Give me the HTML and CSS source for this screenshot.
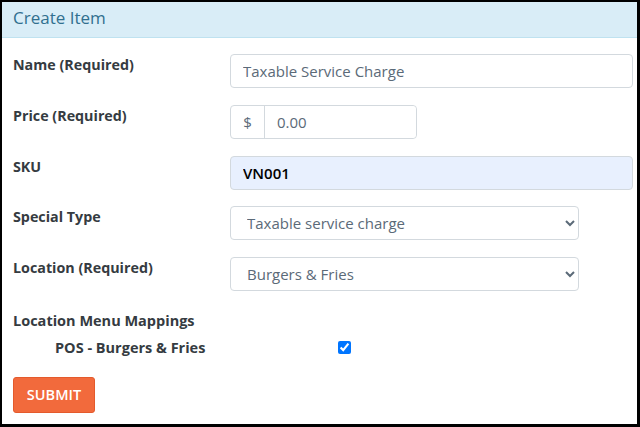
FILE: index.html
```html
<!DOCTYPE html>
<html lang="en">
<head>
    <meta charset="UTF-8">
    <title>Create Item</title>
    <link rel="stylesheet" href="styles.css">
</head>
<body>
    <div class="panel">
        <div class="panel-heading">Create Item</div>
        <form class="panel-body">
            <div class="form-row">
                <label class="form-label">Name (Required)</label>
                <input class="form-control" type="text" value="Taxable Service Charge">
            </div>
            <div class="form-row">
                <label class="form-label">Price (Required)</label>
                <div class="input-group">
                    <span class="input-addon">$</span>
                    <input class="form-control" type="text" value="0.00">
                </div>
            </div>
            <div class="form-row">
                <label class="form-label">SKU</label>
                <input class="form-control autofill" type="text" value="VN001">
            </div>
            <div class="form-row">
                <label class="form-label">Special Type</label>
                <select class="form-control form-select">
                    <option>Taxable service charge</option>
                </select>
            </div>
            <div class="form-row">
                <label class="form-label">Location (Required)</label>
                <select class="form-control form-select">
                    <option>Burgers &amp; Fries</option>
                </select>
            </div>
            <div class="mappings">
                <div class="mappings-title">Location Menu Mappings</div>
                <div class="mapping-row">
                    <span class="mapping-name">POS - Burgers &amp; Fries</span>
                    <input type="checkbox" checked>
                </div>
            </div>
            <button class="btn-submit" type="button">SUBMIT</button>
        </form>
    </div>
</body>
</html>
```

FILE: styles.css
```css
* {
    margin: 0;
    padding: 0;
    box-sizing: border-box;
}
body {
    font-family: 'Open Sans', Lato, sans-serif;
    background: #fff;
}
.panel {
    width: 640px;
    height: 427px;
    border: 2px solid #000;
    border-right-width: 3px;
    border-bottom-width: 3px;
    background: #fff;
}
.panel-heading {
    height: 36px;
    background: #d9edf7;
    border-bottom: 1px solid #bfe2f0;
    color: #31708f;
    font-size: 17px;
    padding: 4px 11px;
}
.panel-body {
    padding: 16px 4px 0 11px;
}
.form-row {
    display: flex;
    align-items: flex-start;
    margin-bottom: 16.75px;
}
.form-label {
    width: 217px;
    flex-shrink: 0;
    font-size: 14.3px;
    font-weight: 700;
    color: #353b41;
    padding-top: 1px;
}
.form-control {
    width: 403px;
    height: 34px;
    border: 1px solid #d3d9de;
    border-radius: 4px;
    padding: 0 12px;
    font-family: inherit;
    font-size: 15px;
    color: #5b6a78;
    background: #fff;
    outline: none;
}
.autofill {
    background: #e8f0fe;
    color: #000;
    font-weight: 600;
}
.input-group {
    display: flex;
    width: 187px;
    height: 34px;
    border: 1px solid #d3d9de;
    border-radius: 4px;
}
.input-group .form-control {
    border: none;
    height: 32px;
    width: auto;
    flex: 1;
    min-width: 0;
}
.input-addon {
    width: 34px;
    border-right: 1px solid #d3d9de;
    display: flex;
    align-items: center;
    justify-content: center;
    font-size: 15px;
    color: #5b6a78;
}
.form-select {
    width: 349px;
    padding: 0 12px;
}
.mappings {
    padding-top: 3px;
}
.mappings-title {
    font-size: 14.5px;
    font-weight: 700;
    color: #353b41;
}
.mapping-row {
    display: flex;
    align-items: center;
    padding-left: 42px;
    margin-top: 8px;
}
.mapping-name {
    width: 283px;
    font-size: 14.5px;
    font-weight: 700;
    color: #353b41;
}
.mapping-row input {
    width: 13px;
    height: 13px;
}
.btn-submit {
    margin-top: 20px;
    width: 82px;
    height: 36px;
    background: #f26a3c;
    border: 1px solid #e45a2c;
    border-radius: 3px;
    color: #fff;
    font-family: inherit;
    font-size: 14.5px;
    font-weight: 600;
}
```
